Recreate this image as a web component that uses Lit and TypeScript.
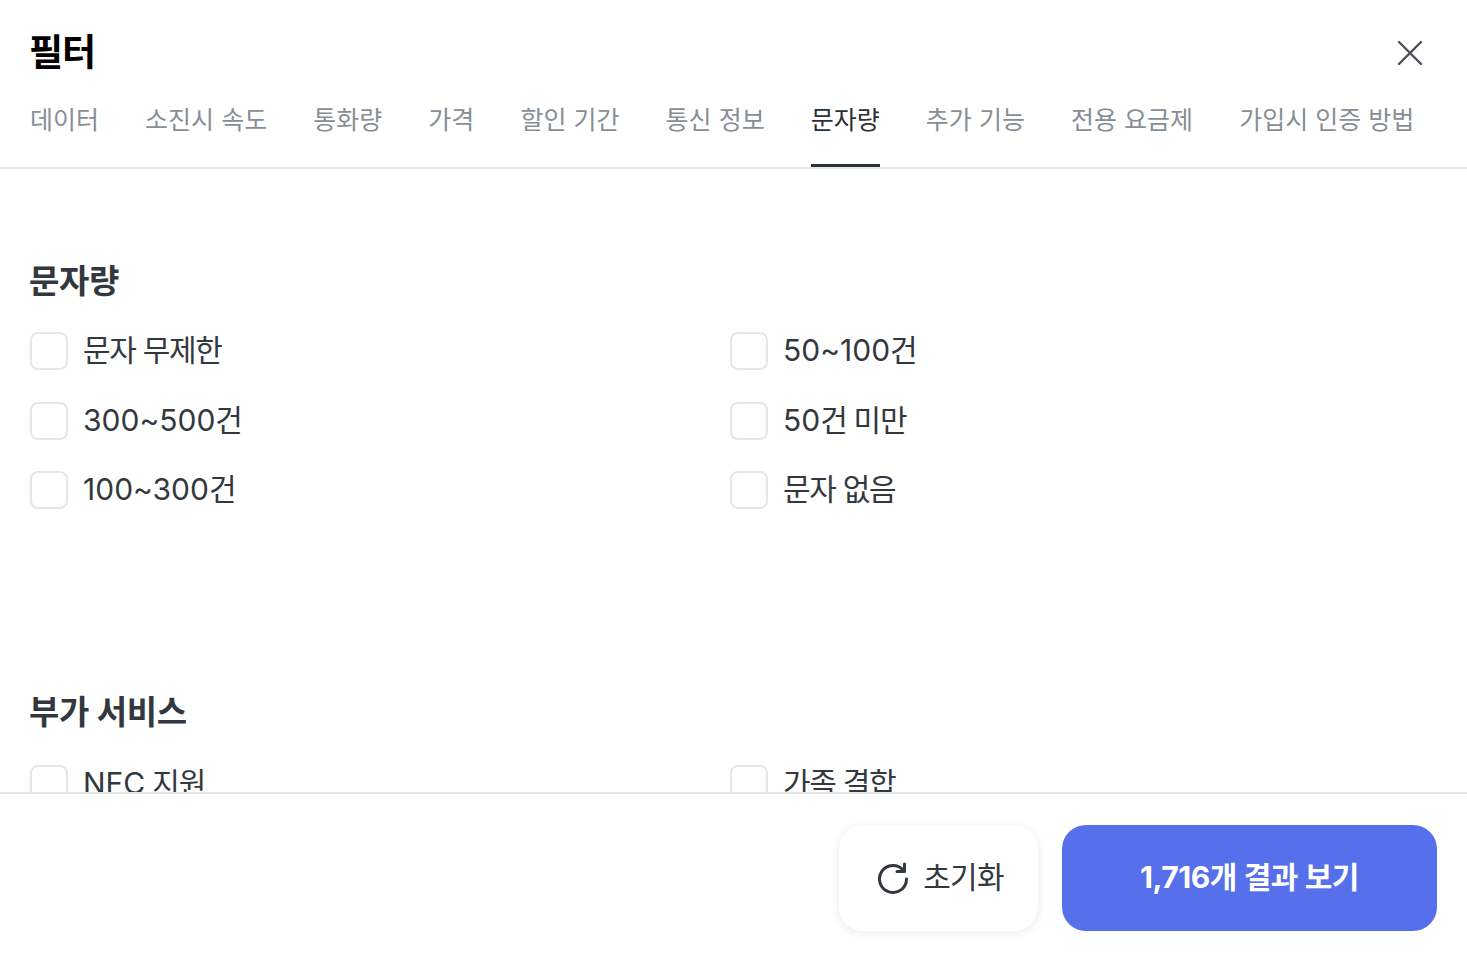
import { LitElement, html, css } from 'lit';
import { customElement } from 'lit/decorators.js';

const TABS = ['데이터', '소진시 속도', '통화량', '가격', '할인 기간', '통신 정보', '문자량', '추가 기능', '전용 요금제', '가입시 인증 방법'];
const ACTIVE_TAB = '문자량';

const SECTIONS = [
  { title: '문자량', options: ['문자 무제한', '50~100건', '300~500건', '50건 미만', '100~300건', '문자 없음'] },
  { title: '부가 서비스', options: ['NFC 지원', '가족 결합'] },
];

// hangul words run a bit narrower than the fallback font, digits don't
function label(text: string) {
  return text.split(/([가-힣]+ [가-힣]+| [가-힣]+)/).map((part) =>
    /[가-힣]+ |^ /.test(part) ? html`<span class="ko">${part}</span>` : part
  );
}

@customElement('app-root')
export class AppRoot extends LitElement {
  static styles = css`
    :host {
      display: flex;
      flex-direction: column;
      height: 960px;
      overflow: hidden;
      background: #fff;
      font-family: Inter, "Noto Sans CJK KR", sans-serif;
      color: #33383e;
    }
    .header {
      display: flex;
      align-items: center;
      justify-content: space-between;
      height: 100px;
      padding: 5px 44px 0 29px;
      box-sizing: border-box;
    }
    .title {
      font-size: 37px;
      line-height: 44px;
      font-weight: 700;
      color: #000;
      letter-spacing: -1px;
    }
    .close {
      display: block;
      width: 26px;
      height: 26px;
    }
    .tabs {
      display: flex;
      gap: 46.1px;
      height: 69px;
      padding: 0 30px;
      box-sizing: border-box;
      border-bottom: 2px solid #e4e7ea;
    }
    .tab {
      height: 67px;
      box-sizing: border-box;
      padding-top: 4px;
      font-size: 25px;
      line-height: 32px;
      white-space: nowrap;
      color: #878e96;
    }
    .tab.active {
      color: #2b3036;
      border-bottom: 3px solid #2b3036;
    }
    .body {
      flex: 1;
      min-height: 0;
      overflow: hidden;
      padding: 92px 30px 0;
    }
    .section + .section {
      margin-top: 183px;
    }
    .section-title {
      font-size: 33px;
      line-height: 40px;
      font-weight: 700;
      color: #33383e;
      letter-spacing: -0.3px;
      margin: 0 0 31px -1px;
    }
    .section + .section .section-title {
      margin-bottom: 33px;
    }
    .options {
      display: grid;
      grid-template-columns: 700px 1fr;
      row-gap: 31.5px;
    }
    .option {
      display: flex;
      align-items: center;
      gap: 15px;
      height: 38px;
      font-size: 30px;
      line-height: 38px;
      white-space: nowrap;
    }
    .option .text {
      margin-bottom: 2px;
    }
    .ko {
      letter-spacing: -1.3px;
    }
    .check {
      width: 38px;
      height: 38px;
      box-sizing: border-box;
      border: 2px solid #e4e7ea;
      border-radius: 8px;
      flex: none;
    }
    .footer {
      display: flex;
      justify-content: flex-end;
      gap: 24px;
      height: 168px;
      padding: 31px 30px 0 0;
      box-sizing: border-box;
      border-top: 2px solid #e4e7ea;
    }
    .btn {
      height: 106px;
      border: 0;
      border-radius: 24px;
      font-family: inherit;
      font-size: 30px;
      display: flex;
      align-items: center;
      justify-content: center;
      padding: 0 0 6px;
    }
    .reset {
      width: 199px;
      gap: 13px;
      padding: 0 0 0 3px;
      background: #fff;
      color: #33383e;
      box-shadow: 0 2px 8px rgba(40, 50, 60, 0.1);
    }
    .reset span {
      margin-bottom: 6px;
      letter-spacing: -0.7px;
    }
    .reset svg {
      width: 34px;
      height: 34px;
    }
    .apply {
      width: 375px;
      background: #5570ea;
      color: #fff;
      font-weight: 700;
      letter-spacing: -0.45px;
    }
  `;

  render() {
    return html`
      <div class="header">
        <div class="title">필터</div>
        <svg class="close" viewBox="0 0 26 26" fill="none" stroke="#4a5056" stroke-width="2.4" stroke-linecap="round">
          <path d="M2 2 L24 24 M24 2 L2 24" />
        </svg>
      </div>
      <div class="tabs">
        ${TABS.map((t) => html`<div class="tab ${t === ACTIVE_TAB ? 'active' : ''}">${t}</div>`)}
      </div>
      <div class="body">
        ${SECTIONS.map((s) => html`
          <div class="section">
            <div class="section-title">${s.title}</div>
            <div class="options">
              ${s.options.map((o) => html`
                <label class="option"><span class="check"></span><span class="text">${label(o)}</span></label>
              `)}
            </div>
          </div>
        `)}
      </div>
      <div class="footer">
        <button class="btn reset">
          <svg viewBox="0 0 34 34" fill="none" stroke="#33383e" stroke-width="3" stroke-linecap="round" stroke-linejoin="round">
            <path d="M27.5 9.5 A13.5 13.5 0 1 0 30.5 18" />
            <path d="M28.5 3 V10.5 H21" />
          </svg>
          <span>초기화</span>
        </button>
        <button class="btn apply">1,716개 결과 보기</button>
      </div>
    `;
  }
}
